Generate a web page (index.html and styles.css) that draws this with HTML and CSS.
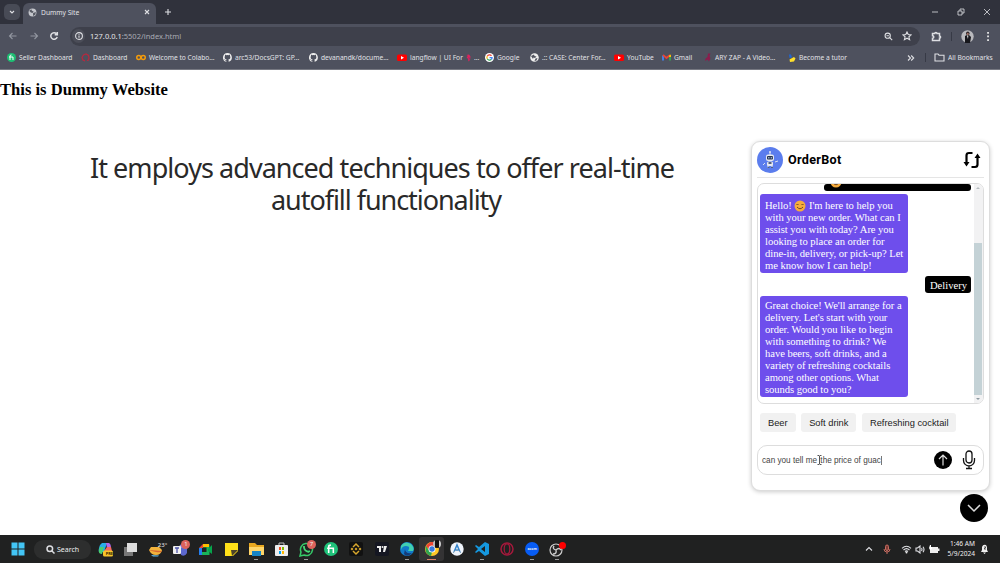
FILE: index.html
```html
<!DOCTYPE html>
<html lang="en">
  <head>
    <meta charset="UTF-8" />
    <meta name="viewport" content="width=device-width, initial-scale=1.0" />
    <title>Dummy Site</title>
    <link rel="stylesheet" href="styles.css">
  </head>
  <body>
    <header class="browser">
      <div class="tab-strip">
        <button class="tab-search"><svg width="6" height="6" viewBox="0 0 6 6"><path class="line" d="M1 2l2 2 2-2" /></svg></button>
        <div class="tab">
          <svg width="9" height="9" viewBox="0 0 16 16"><circle cx="8" cy="8" r="7" fill="#c4c6cc" /><path fill="#565963" d="M2 5l4-3 1 3 3 1-2 3-3-1zM9 9l5-2-1 5-4 2z" /></svg>
          <span class="tab-title">Dummy Site</span>
          <svg width="6" height="6" viewBox="0 0 6 6"><path class="line" d="M1 1l4 4M5 1L1 5" /></svg>
        </div>
        <svg class="new-tab" width="8" height="8" viewBox="0 0 8 8"><path class="line" d="M4 1v6M1 4h6" /></svg>
        <div class="window-buttons">
          <svg width="8" height="8" viewBox="0 0 8 8"><path class="thin" d="M1 4h6" /></svg>
          <svg width="8" height="8" viewBox="0 0 8 8"><path class="thin" d="M1 3h4v4H1zM3 3V1h4v4H5" /></svg>
          <svg width="8" height="8" viewBox="0 0 8 8"><path class="thin" d="M1 1l6 6M7 1L1 7" /></svg>
        </div>
      </div>

      <div class="toolbar">
        <div class="nav-buttons">
          <svg width="10" height="10" viewBox="0 0 10 10"><path class="line dim" d="M8.5 5h-7M4.5 2l-3 3 3 3" /></svg>
          <svg width="10" height="10" viewBox="0 0 10 10"><path class="line dim" d="M1.500 5h7M5.500 2l3 3-3 3" /></svg>
          <svg width="10" height="10" viewBox="0 0 10 10"><path class="line bold" d="M8.200 6A3.300 3.300 0 1 1 7.500 2.700M8.300 1v2.700H5.700" /></svg>
        </div>
        <div class="address">
          <span class="info"><svg width="8" height="8" viewBox="0 0 8 8"><circle class="line" cx="4" cy="4" r="3.400" /><path class="line" d="M4 3.600v2.200M4 1.900v.8" /></svg></span>
          <span class="url"><b>127.0.0.1</b>:5502/index.html</span>
          <svg width="9" height="9" viewBox="0 0 9 9"><circle class="line" cx="3.700" cy="3.700" r="2.600" /><path class="line" d="M5.700 5.700l2.500 2.500M2.500 3.700h2.400" /></svg>
          <svg width="10" height="10" viewBox="0 0 10 10"><path class="line" d="M5 1l1.200 2.600 2.900.3-2.200 1.900.7 2.900L5 7.200 2.400 8.700l.7-2.900L.9 3.900l2.900-.3z" /></svg>
        </div>
        <svg class="extensions" width="11" height="11" viewBox="0 0 11 11"><path class="line bold" d="M1.500 2.500h2.300a1.100 1.100 0 0 1 2.200 0h2.500v2.400a1.100 1.100 0 0 1 0 2.200v2.400h-7V7.300a1.300 1.300 0 0 0 0-2.600z" /></svg>
        <i class="divider"></i>
        <svg class="avatar" width="13" height="13" viewBox="0 0 13 13"><circle cx="6.500" cy="6.500" r="6.200" fill="#b9b9bd" /><circle cx="6.800" cy="3.400" r="1.800" fill="#32272a" /><path fill="#17171c" d="M4 6l2-1h2l2 2-1 6H4z" /><path fill="#fff" d="M6 5.500h1.300L7 9z" /><circle cx="6.800" cy="4" r="1" fill="#a97869" /></svg>
        <svg width="4" height="11" viewBox="0 0 4 11"><path class="fill" d="M1.200 1h1.700v1.700H1.200zM1.200 4.600h1.700v1.700H1.200zM1.200 8.200h1.700v1.700H1.200z" /></svg>
      </div>

      <nav class="bookmarks">
        <a><svg width="9" height="9" viewBox="0 0 18 18"><circle cx="9" cy="9" r="9" fill="#1dbf73" /><path class="fiverr" d="M6 14V6q0-2 3-2M4 8h8v6" /></svg>Seller Dashboard</a>
        <a><svg width="9" height="9" viewBox="0 0 18 18"><path d="M12 15l3-1 1-4-1-5-5-3-5 2-3 5 2 5 4 2" fill="none" stroke="#b8283e" stroke-width="2.500" /></svg>Dashboard</a>
        <a><svg width="10" height="9" viewBox="0 0 20 18"><g fill="none" stroke="#f49b0b" stroke-width="3"><circle cx="5.500" cy="9" r="4" /><circle cx="14.500" cy="9" r="4" /></g></svg>Welcome to Colabo...</a>
        <a><svg width="9" height="9" viewBox="0 0 16 16"><path class="fill" d="M8 0a8 8 0 0 0-2.500 15.600c.4.100.5-.2.500-.4v-1.500c-2.200.5-2.700-1-2.700-1-.4-.9-.9-1.200-.9-1.200-.7-.5.100-.5.100-.5.800.1 1.200.8 1.200.8.700 1.200 1.900.9 2.300.7.100-.5.300-.9.500-1.100-1.800-.2-3.600-.9-3.600-4 0-.9.300-1.600.8-2.100-.1-.2-.4-1 .1-2.100 0 0 .7-.2 2.200.8a8 8 0 0 1 4 0c1.500-1 2.200-.8 2.200-.8.500 1.100.2 1.900.1 2.100.5.600.8 1.300.8 2.100 0 3.100-1.900 3.700-3.600 3.900.3.300.5.800.5 1.500v2.300c0 .2.100.5.500.4A8 8 0 0 0 8 0z" /></svg>arc53/DocsGPT: GP...</a>
        <a><svg width="9" height="9" viewBox="0 0 16 16"><path class="fill" d="M8 0a8 8 0 0 0-2.500 15.600c.4.100.5-.2.500-.4v-1.500c-2.200.5-2.700-1-2.700-1-.4-.9-.9-1.200-.9-1.200-.7-.5.100-.5.100-.5.800.1 1.200.8 1.200.8.700 1.200 1.900.9 2.300.7.100-.5.300-.9.500-1.100-1.800-.2-3.600-.9-3.600-4 0-.9.300-1.600.8-2.100-.1-.2-.4-1 .1-2.100 0 0 .7-.2 2.200.8a8 8 0 0 1 4 0c1.500-1 2.200-.8 2.200-.8.500 1.100.2 1.900.1 2.100.5.600.8 1.300.8 2.100 0 3.100-1.900 3.700-3.600 3.900.3.300.5.800.5 1.500v2.300c0 .2.100.5.500.4A8 8 0 0 0 8 0z" /></svg>devanandk/docume...</a>
        <a><svg width="10" height="9" viewBox="0 0 20 18"><rect y="3" width="20" height="13" rx="3" fill="#f00" /><path fill="#fff" d="M8 6l6 3.500L8 13z" /></svg>langflow | UI For <svg class="parrot" width="5" height="8" viewBox="0 0 10 16"><path fill="#e0225c" d="M1 2l5-1 3 4-1 7-3 3-1-5-3-4 3-2z" /><path fill="#873a70" d="M5 6l3 2-2 5z" /></svg> ...</a>
        <a><svg width="9" height="9" viewBox="0 0 18 18"><circle cx="9" cy="9" r="9" fill="#fff" /><g fill="none" stroke-width="2.500"><path stroke="#ea4335" d="M4.500 6.500A5.200 5.200 0 0 1 13 5.500" /><path stroke="#fbbc05" d="M4.500 6.500a5 5 0 0 0 0 5" /><path stroke="#34a853" d="M4.500 11.500a5.200 5.200 0 0 0 8 1.500" /><path stroke="#4285f4" d="M12.500 13q1.700-1.500 1.700-4H9" /></g></svg>Google</a>
        <a><svg width="9" height="9" viewBox="0 0 18 18"><circle cx="9" cy="9" r="8.500" fill="#eee" /><path fill="#50535f" d="M2 6l6-3 1 3 4 1-3 3-3-1-1 3zM11 11l4-1-2 5-4 1z" /></svg>.:: CASE: Center For...</a>
        <a><svg width="10" height="9" viewBox="0 0 20 18"><rect y="3" width="20" height="13" rx="3" fill="#f00" /><path fill="#fff" d="M8 6l6 3.500L8 13z" /></svg>YouTube</a>
        <a><svg width="9" height="9" viewBox="0 0 18 18"><g fill="none" stroke-width="3.500"><path stroke="#4285f4" d="M2 15V5" /><path stroke="#34a853" d="M16 15V5" /><path stroke="#ea4335" d="M2 4l7 6 7-6" /></g><path fill="#fbbc05" d="M14 5l4-2v5h-4z" /></svg>Gmail</a>
        <a><svg width="8" height="9" viewBox="0 0 16 18"><path fill="#8c1d4d" d="M8 1h5l-2 5 2 4-3 7-3-4-5 3 1-5 4-3z" /></svg>ARY ZAP - A Video...</a>
        <a><svg width="8" height="10" viewBox="0 0 16 20"><path fill="#2166d1" d="M2 3h4l2 6-5 1z" /><path fill="#ffe02c" d="M3 13l9-5 3 3-3 6-8 1z" /></svg>Become a tutor</a>
        <svg class="more" width="8" height="8" viewBox="0 0 8 8"><path class="line" d="M1 1.500L3.500 4 1 6.500M4.200 1.500L6.700 4 4.200 6.500" /></svg>
        <i class="divider"></i>
        <a class="all"><svg width="11" height="9" viewBox="0 0 11 9"><path class="line" d="M1 8V1h3l1 1.200h5V8z" /></svg>All Bookmarks</a>
      </nav>
    </header>

    <main class="page">
      <div class="content">
        <h1>This is Dummy Website</h1>
        <div class="caption">
          <div>It employs advanced techniques to offer real-time</div>
          <div class="second">autofill functionality</div>
        </div>
      </div>

      <div class="widget">
        <section class="chat">
          <div class="chat-header">
            <svg width="26" height="26" viewBox="0 0 26 26"><circle cx="13" cy="13" r="13" fill="#5b7ded" /><path stroke="#dbe2ef" fill="none" d="M13 5v3M8 16l-2 2M18 15l3-1M11 18v3M15 18v3" /><circle cx="13" cy="5" r="1" fill="#dbe2ef" /><rect x="9" y="7.500" width="8" height="6.500" rx="2" fill="#e7eaf0" /><rect x="10" y="9" width="6" height="3.500" rx="1" fill="#283552" /><rect x="10" y="14.500" width="6" height="4.500" rx="1.500" fill="#e7eaf0" /><path fill="#54627e" d="M11.500 15h3v2h-3zM10.500 20h2v1h-2zM14 20h2v1h-2z" /><path fill="#8fa6c4" d="M11 10h1.500v1.500H11zM13.700 10h1.500v1.500h-1.500z" /></svg>
            <h2>OrderBot</h2>
            <svg width="18" height="18" viewBox="0 0 18 18"><path fill="none" stroke="#000" stroke-width="2.200" d="M9.500 2H6Q3.500 2 3.500 4.500V12M8.500 16H12q2.500 0 2.500-2.500V6" /><path d="M.5 11h6l-3 4.500zM11.500 7h6l-3-4.500z" /></svg>
          </div>

          <div class="chat-box">
            <div class="messages">
              <div class="message user previous"><svg class="smiley" width="12" height="12" viewBox="0 0 24 24"><circle cx="12" cy="12" r="11" fill="#f6ac3d" /><path class="smile" d="M5 10q2-4 4 0M15 10q2-4 4 0M6 14q6 7 12 0" /></svg></div>
              <div class="message bot greeting">Hello! <svg class="smiley" width="12" height="12" viewBox="0 0 24 24"><circle cx="12" cy="12" r="11" fill="#f6ac3d" /><path class="smile" d="M5 10q2-4 4 0M15 10q2-4 4 0M6 14q6 7 12 0" /></svg> I'm here to help you<br />with your new order. What can I<br />assist you with today? Are you<br />looking to place an order for<br />dine-in, delivery, or pick-up? Let<br />me know how I can help!</div>
              <div class="message user">Delivery</div>
              <div class="message bot">Great choice! We'll arrange for a<br />delivery. Let's start with your<br />order. Would you like to begin<br />with something to drink? We<br />have beers, soft drinks, and a<br />variety of refreshing cocktails<br />among other options. What<br />sounds good to you?</div>
            </div>
            <div class="scrollbar">
              <svg width="8" height="8" viewBox="0 0 8 8"><path fill="#b5bcc0" d="M2 5l2-2 2 2z" /></svg>
              <div class="thumb"></div>
              <svg width="8" height="8" viewBox="0 0 8 8"><path fill="#8d9aa1" d="M2 3l2 2 2-2z" /></svg>
            </div>
          </div>

          <div class="suggestions">
            <button>Beer</button>
            <button>Soft drink</button>
            <button>Refreshing cocktail</button>
          </div>

          <div class="prompt">
            <span class="prompt-text">can you tell me<svg class="pointer" width="5" height="10" viewBox="0 0 5 10"><path d="M.5.500h1.500l.5.500.5-.5h1.500M2.500 1v8M.5 9.500H2l.5-.5.5.5h1.500" /></svg> the price of guac<i class="caret"></i></span>
            <svg width="18" height="18" viewBox="0 0 18 18"><circle cx="9" cy="9" r="9" /><path fill="none" stroke="#ddd" stroke-width="1.200" d="M9 14.500V4M5 8l4-4 4 4" /></svg>
            <svg class="mic" width="14" height="20" viewBox="0 0 14 20"><g fill="none" stroke="#111" stroke-width="1.300"><rect x="4" y="1" width="6" height="12" rx="3" /><path d="M1.500 8v2.500a5.500 5.500 0 0 0 11 0V8M7 16v3M4 18.500h6" /></g></svg>
          </div>
        </section>

        <button class="toggle"><svg width="14" height="9" viewBox="0 0 14 9"><path fill="none" stroke="#ddd" stroke-width="1.500" d="M1 1l6 6 6-6" /></svg></button>
      </div>
    </main>

    <footer class="taskbar">
      <svg class="start" width="14" height="14" viewBox="0 0 14 14"><path fill="#43c5f5" d="M.5.500h6v6h-6zM7.500.500h6v6h-6zM.5 7.500h6v6h-6zM7.500 7.500h6v6h-6z" /></svg>
      <div class="search"><svg width="9" height="9" viewBox="0 0 9 9"><circle cx="3.800" cy="3.800" r="2.800" class="line bold" /><path class="line bold" d="M6 6l2.500 2.500" /></svg>Search</div>
      <div class="apps">
        <span><svg width="15" height="15" viewBox="0 0 15 15"><path fill="#28aee8" d="M4 1h5L6 10H1q-1-2 1-7z" /><path fill="#49cf70" d="M2 5h4l-2 7Q0 12 1 8z" /><path fill="#b267ea" d="M8 1h3q2 1 2 5h-4z" /><path fill="#f46a5e" d="M9 5h4l1 4H6z" /><rect x="5" y="8.500" width="10" height="6" rx="1.500" fill="#f7c52a" /></svg><small class="pre">PRE</small></span>
        <span><svg width="15" height="15" viewBox="0 0 15 15"><path fill="#777" d="M1 5h9v9H1z" /><path fill="#ddd" d="M4 1h10v9H4z" /></svg></span>
        <span><svg width="16" height="15" viewBox="0 0 16 15"><path fill="#f2b33c" d="M3 5h8l3 3q-1 5-6 5T1 8z" /><path fill="#d86531" d="M1 8l13 1q-1 2-6 1T1 8z" /><path fill="#63b5e2" d="M3 13l8 .500-1 1H5z" /></svg><small class="degrees">23°</small></span>
        <span><svg width="15" height="15" viewBox="0 0 15 15"><circle cx="10" cy="6" r="4" fill="#7b83eb" /><path fill="#5c68cf" d="M7 6h7v5q-2 4-6 2z" /><rect y="4" width="8" height="8" rx="1" fill="#eee" /><path fill="none" stroke="#4e55aa" stroke-width="1.300" d="M2 6h4M4 6v5" /></svg><small class="badge">1</small></span>
        <span><svg width="13" height="13" viewBox="0 0 13 13"><path fill="none" stroke="#18b45b" stroke-width="3" d="M3 10.500h6V3H4" /><path fill="#ffbd00" d="M4 1h6v3H4z" /><path fill="#247ff0" d="M0 5h3v7H0z" /><path fill="#ea4335" d="M0 5l4-4v4z" /><path fill="#06a44b" d="M9 6l4-4v9L9 8z" /></svg></span>
        <span><svg width="13" height="13" viewBox="0 0 13 13"><path fill="#ffe019" d="M0 0h13v8l-5 5H0z" /><path fill="#4c442b" d="M6 7h7l-6 6z" /></svg></span>
        <span class="running"><svg width="15" height="13" viewBox="0 0 15 13"><path fill="#e9a820" d="M0 0h6l2 2h7v10H0z" /><path fill="#ffd66a" d="M0 4h15v8H0z" /><path fill="#1684c6" d="M3 8h9v5H3z" /></svg></span>
        <span><svg width="13" height="14" viewBox="0 0 13 14"><path fill="none" stroke="#bbb" d="M4 4V1h5v3" /><rect y="3" width="13" height="11" rx="1" fill="#eee" /><path fill="#f25022" d="M4 5h2v3H4z" /><path fill="#7fba00" d="M7 5h2v3H7z" /><path fill="#00a4ef" d="M4 9h2v3H4z" /><path fill="#ffb900" d="M7 9h2v3H7z" /></svg></span>
        <span class="running"><svg width="15" height="15" viewBox="0 0 15 15"><path fill="none" stroke="#35c968" stroke-width="1.500" d="M1 14l1-4a6 6 0 1 1 3 3z" /><path fill="none" stroke="#45d775" stroke-width="1.800" d="M5 5q0 4 5 5M5 4v2M9 10l2-1" /></svg><small class="badge">7</small></span>
        <span><svg width="14" height="14" viewBox="0 0 18 18"><circle cx="9" cy="9" r="9" fill="#1fc27a" /><path class="fiverr" d="M6 14V6q0-2 3-2M4 8h8v6" /></svg></span>
        <span><svg width="14" height="14" viewBox="0 0 14 14"><rect width="14" height="14" rx="2" fill="#111" /><path fill="none" stroke="#d8a72d" stroke-width="1.500" d="M4 5l3-3 3 3M4 9l3 3 3-3" /><path fill="#d8a72d" d="M3 5.500L4.500 7 3 8.500 1.500 7zM11 5.500L12.500 7 11 8.500 9.500 7zM7 5.500L8.500 7 7 8.500 5.500 7z" /></svg></span>
        <span><svg width="14" height="14" viewBox="0 0 14 14"><rect width="14" height="14" rx="2" fill="#151722" /><path fill="#eee" d="M2 4h4v6H4V6H2zM9 4h3l-2 6H8z" /><circle cx="7.500" cy="5" r="1" fill="#eee" /></svg></span>
        <span class="running"><svg width="14" height="14" viewBox="0 0 14 14"><circle cx="7" cy="7" r="7" fill="#117ac9" /><path fill="#41cfb0" d="M1 4Q5-2 11 2q4 4 2 7H8q3-5-2-5-4 0-5 4z" /><path fill="#153c78" d="M5 7q0 5 7 4-5 5-8 1z" /></svg></span>
        <span class="running active"><svg width="14" height="14" viewBox="0 0 14 14"><circle cx="7" cy="7" r="7" fill="#ffc928" /><path fill="#eb4335" d="M1 4q3-4 6-4 4 0 6 4H7L4 8z" /><path fill="#2fa650" d="M1 4l4 6h2l-1 4Q-1 12 1 4z" /><circle cx="7" cy="7" r="3.500" fill="#fff" /><circle cx="7" cy="7" r="2.700" fill="#3479df" /></svg><i class="profile"></i></span>
        <span><svg width="14" height="14" viewBox="0 0 14 14"><circle cx="7" cy="7" r="6.700" fill="#eff4fb" /><path fill="none" stroke="#3685cc" stroke-width="1.500" d="M4 10l3-7 3 7M5 8h4" /><path fill="none" stroke="#87a5ba" d="M3 11l4-4 4 4" /></svg></span>
        <span class="running"><svg width="14" height="14" viewBox="0 0 14 14"><path fill="#1598df" d="M10 0l4 2v10l-4 2-6-5-3 2-1-1 3-3-3-3 1-1 3 2zm0 4L6 7l4 3z" /></svg></span>
        <span><svg width="14" height="14" viewBox="0 0 14 14"><circle cx="7" cy="7" r="6" fill="none" stroke="#a5193c" stroke-width="1.500" /><ellipse cx="7" cy="7" rx="2.800" ry="5" fill="none" stroke="#a5193c" stroke-width="1.200" /></svg></span>
        <span class="running"><svg width="14" height="14" viewBox="0 0 14 14"><circle cx="7" cy="7" r="7" fill="#075cf4" /></svg><small class="zoom">zoom</small></span>
        <span class="running"><svg width="17" height="15" viewBox="0 0 17 15"><circle cx="7" cy="8" r="6" fill="#242424" stroke="#ccc" stroke-width="1.200" /><path fill="none" stroke="#ccc" stroke-width="1.400" d="M7 8q-4-1-2-4M7 8q3-3 5 0M7 8q1 4-3 4" /><circle cx="13.500" cy="3.500" r="3.500" fill="#f00" /></svg></span>
      </div>
      <div class="tray">
        <svg width="8" height="6" viewBox="0 0 8 6"><path class="line" d="M1 4.500l3-3 3 3" /></svg>
        <svg width="8" height="11" viewBox="0 0 8 11"><rect x="2.500" y="1" width="3" height="5.500" rx="1.500" fill="#7e3b34" stroke="#c56b60" /><path fill="none" stroke="#c56b60" d="M1 5q0 3 3 3t3-3M4 8v2" /></svg>
        <svg width="11" height="9" viewBox="0 0 11 9"><path class="line" d="M1 3.300q4.500-4 9 0M2.500 5q3-2.700 6 0M4 6.500q1.500-1.200 3 0" /><circle class="fill" cx="5.500" cy="7.500" r="1" /></svg>
        <svg width="11" height="9" viewBox="0 0 11 9"><path class="line" d="M1 3h1.500L5 1v7L2.500 6H1zM6.500 3q1 1.500 0 3M8 1.700q2 2.800 0 5.600" /></svg>
        <svg width="11" height="9" viewBox="0 0 11 9"><path class="fill" d="M3 2h6v1.500h1.500V6H9v2H1V4z" /><path fill="#fff" d="M1 0h1v2h1v2L1 5 0 3z" /></svg>
      </div>
      <div class="clock">1:46 AM<br />5/9/2024</div>
      <svg class="bell" width="9" height="10" viewBox="0 0 9 10"><path fill="#eee" d="M1 8l1-2V3q1-3 4-2l1 2v3l1 2zM3 8.500h3L4.500 10z" /><path fill="none" stroke="#333" stroke-width=".8" d="M4 3h2L4 5h2" /></svg>
    </footer>
  </body>
</html>
```
FILE: styles.css
```css
* {
  box-sizing: border-box;
}

body {
  margin: 0;
  width: 1000px;
  height: 563px;
  overflow: hidden;
  display: flex;
  flex-direction: column;
  background-color: #fff;
  font-family: "Liberation Sans", Arial, sans-serif;
}

svg {
  display: block;
  flex: none;
}

button {
  border: none;
  padding: 0;
  font-family: inherit;
}

.line,
.thin {
  fill: none;
  stroke: #dedfe3;
  stroke-width: 1.1;
}

.thin {
  stroke-width: 0.8;
}

.bold {
  stroke-width: 1.5;
}

.dim {
  stroke: #9296a0;
}

.fill {
  fill: #eee;
}

.fiverr {
  fill: none;
  stroke: #fff;
  stroke-width: 2;
}

/* browser */
.browser {
  height: 70px;
  flex: none;
  background-color: #4e515e;
  border-bottom: 1px solid #777982;
  color: #e1e2e6;
  font-family: "Noto Sans", sans-serif;
  font-size: 6.65px;
}

.tab-strip {
  height: 24px;
  display: flex;
  align-items: center;
  background-color: #30323c;
}

.tab-search {
  width: 16px;
  height: 16px;
  margin-left: 4px;
  border-radius: 5px;
  background-color: #484b56;
  display: flex;
  align-items: center;
  justify-content: center;
}

.tab {
  width: 133px;
  height: 21px;
  margin: 3px 8px 0 3px;
  padding: 0 6px 3px 5px;
  display: flex;
  align-items: center;
  gap: 4px;
  border-radius: 6px 6px 0 0;
  background-color: #4e515e;
}

.tab-title {
  flex: 1;
  font-size: 6.7px;
}

.window-buttons {
  margin-left: auto;
  padding-right: 9px;
  display: flex;
  gap: 18px;
}

.toolbar {
  height: 24px;
  padding: 0 10px 0 8px;
  display: flex;
  align-items: center;
}

.nav-buttons {
  width: 62px;
  display: flex;
  gap: 10.5px;
}

.address {
  width: 850px;
  height: 19px;
  margin-right: 11px;
  padding: 0 8px 0 2px;
  display: flex;
  align-items: center;
  gap: 9px;
  border-radius: 10px;
  background-color: #3e404b;
}

.info {
  width: 13px;
  height: 14px;
  display: flex;
  align-items: center;
  justify-content: center;
  border-radius: 7px;
  background-color: #4b4d58;
}

.url {
  flex: 1;
  margin-left: -4px;
  color: #a9abb4;
  font-size: 7.5px;
}

.url b {
  color: #e5e6e9;
  font-weight: normal;
}

.divider {
  width: 1px;
  height: 9px;
  background-color: #373a46;
}

.extensions {
  margin-right: 9px;
}

.avatar {
  margin: 0 12px 0 9px;
}

.bookmarks {
  height: 19px;
  padding: 0 8px 0 7px;
  display: grid;
  grid-template-columns: 74px 55px 87px 86px 88px 88px 45px 84px 48px 42px 84px 119px 18px 9px 1fr;
  align-items: center;
}

.bookmarks a {
  display: flex;
  align-items: center;
  gap: 3px;
  white-space: nowrap;
}

/* page */
.page {
  height: 465px;
  flex: none;
  display: flex;
}

.content {
  flex: 1;
}

h1 {
  height: 72px;
  margin: 0;
  padding-top: 10px;
  font-family: "Liberation Serif", serif;
  font-size: 16.6px;
  line-height: 20px;
}

.caption {
  width: 584px;
  margin: 10px 0 0 90px;
  text-align: center;
  white-space: nowrap;
  color: #292929;
  font-family: "Noto Sans", sans-serif;
  font-size: 27px;
  line-height: 32px;
  letter-spacing: -0.95px;
}

.second {
  padding-left: 8px;
  letter-spacing: -1.05px;
}

.widget {
  padding: 71px 10px 0 0;
}

.chat {
  width: 239px;
  height: 350px;
  padding: 0 5px;
  display: flex;
  flex-direction: column;
  border: 1px solid #ddd;
  border-radius: 9px;
  background-color: #fff;
  box-shadow: 0 1px 4px #ccc;
}

.chat-header {
  height: 36px;
  display: flex;
  align-items: center;
  gap: 5px;
  padding-right: 3px;
  border-bottom: 1px solid #e5e5e5;
}

h2 {
  flex: 1;
  margin: 0;
  font-family: Roboto, sans-serif;
  font-size: 12.6px;
  letter-spacing: 0.3px;
}

.chat-box {
  height: 221px;
  margin-top: 5px;
  display: flex;
  border: 1px solid #ddd;
  border-radius: 7px;
  overflow: hidden;
}

.messages {
  flex: 1;
  padding: 0 3px 0 2px;
  display: flex;
  flex-direction: column;
  align-items: flex-start;
  color: #fff;
  font-family: "Liberation Serif", serif;
  font-size: 10.6px;
  line-height: 12px;
}

.message {
  margin-bottom: 3px;
  padding: 4px 4px 1px 5px;
  border-radius: 3px;
  white-space: nowrap;
}

.bot {
  width: 148px;
  background-color: #6e4eec;
  letter-spacing: -0.05px;
}

.greeting {
  height: 79px;
  padding-top: 6px;
}

.user {
  align-self: flex-end;
  background-color: #000;
}

.previous {
  width: 147px;
  height: 7px;
  padding: 0 6px;
  display: flex;
  align-items: flex-start;
}

.smiley,
.parrot {
  display: inline-block;
  vertical-align: -2px;
}

.message .smiley {
  margin: -1px 0;
}

.previous .smiley {
  margin-top: -8px;
}

.smile {
  fill: none;
  stroke: #714722;
  stroke-width: 2;
}

.scrollbar {
  width: 9px;
  display: flex;
  flex-direction: column;
  justify-content: flex-end;
  background-color: #f2f2f3;
}

.scrollbar svg:first-child {
  margin-bottom: auto;
}

.thumb {
  height: 152px;
  width: 8px;
  background-color: #c4d2d6;
}

.suggestions {
  height: 19px;
  margin: 9px 0 0 3px;
  display: flex;
  gap: 5.5px;
}

.suggestions button {
  padding: 0 8px;
  border-radius: 3px;
  background-color: #f1f1f1;
  color: #222;
  font-size: 9.3px;
}

.prompt {
  height: 30px;
  margin-top: 13px;
  padding: 0 7px 0 4px;
  display: flex;
  align-items: center;
  gap: 10px;
  border: 1px solid #ddd;
  border-radius: 10px;
}

.prompt-text {
  flex: 1;
  color: #444;
  font-size: 8.2px;
}

.pointer {
  display: inline-block;
  margin: 0 -4px 0 0;
  vertical-align: -2px;
  fill: none;
  stroke: #555;
}

.caret {
  display: inline-block;
  width: 1px;
  height: 9px;
  vertical-align: -2px;
  background-color: #777;
}

.toggle {
  width: 28px;
  height: 28px;
  margin: 3px 2.5px 0 auto;
  display: flex;
  align-items: center;
  justify-content: center;
  border-radius: 50%;
  background-color: #000;
}

/* taskbar */
.taskbar {
  height: 28px;
  flex: none;
  display: flex;
  align-items: center;
  background-color: #202121;
  color: #eee;
  font-family: "Noto Sans", sans-serif;
}

.start {
  margin-left: 11px;
}

.search {
  width: 57px;
  height: 19px;
  margin: 0 2px 0 9px;
  padding-left: 12px;
  display: flex;
  align-items: center;
  gap: 2px;
  border-radius: 9px;
  background-color: #2d2e2e;
  font-size: 7px;
}

.apps {
  display: grid;
  grid-template-columns: repeat(19, 25.1px);
}

.apps span {
  height: 24px;
  position: relative;
  display: flex;
  align-items: center;
  justify-content: center;
}

.apps .running::after {
  content: "";
  width: 4px;
  height: 1px;
  position: absolute;
  bottom: 1px;
  background-color: #999;
}

.apps .active {
  border-radius: 3px;
  background-color: #343334;
}

.apps .active::after {
  width: 9px;
  background-color: #dc8165;
}

.apps small {
  position: absolute;
  font-size: 5px;
  line-height: 8px;
}

.apps .pre {
  right: 5px;
  bottom: 4px;
  color: #302000;
  font-size: 4px;
  font-weight: bold;
  line-height: 6px;
}

.apps .degrees {
  top: 4px;
  right: 1px;
  font-size: 6px;
}

.apps .badge {
  width: 9px;
  height: 9px;
  top: 3px;
  right: 3px;
  border-radius: 50%;
  text-align: center;
  background-color: #dc625c;
  font-size: 6px;
}

.apps .zoom {
  font-size: 3.5px;
  font-weight: bold;
}

.profile {
  width: 8px;
  height: 8px;
  position: absolute;
  top: 3px;
  right: 3px;
  border-radius: 50%;
  background: linear-gradient(90deg, #bbb 30%, #111 30%, #111 75%, #ccc 75%);
}

.tray {
  margin-left: auto;
  padding-right: 6px;
  display: flex;
  align-items: center;
  gap: 3px;
}

.tray svg:nth-child(-n + 2) {
  margin-right: 7px;
}

.clock {
  width: 29px;
  text-align: right;
  font-size: 6.6px;
  line-height: 10px;
}

.bell {
  margin: 0 11px 0 5px;
}
```
